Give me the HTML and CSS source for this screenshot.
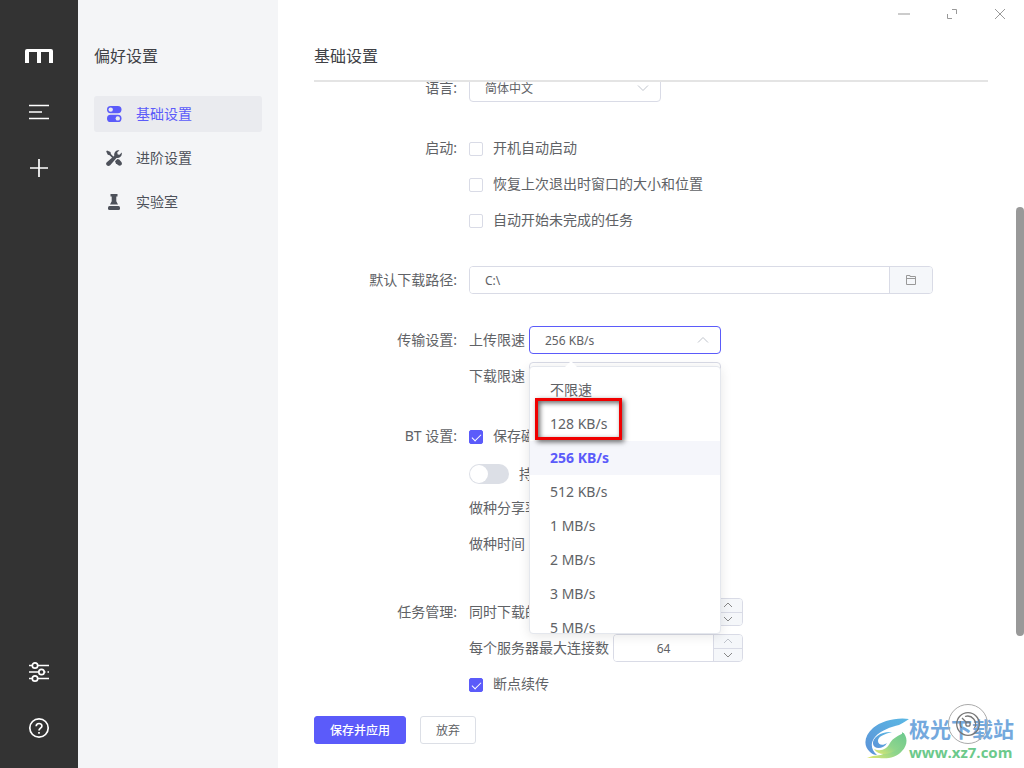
FILE: index.html
```html
<!DOCTYPE html>
<html lang="zh-CN">
<head>
<meta charset="utf-8">
<title>基础设置</title>
<link rel="stylesheet" href="styles.css">
</head>
<body>
<div class="app">
  <aside class="rail">
    <div class="rail-group">
      <svg class="logo" viewBox="0 0 28 24" aria-label="Motrix"><path d="M0 19V7Q0 5 2 5H26Q28 5 28 7V19H24V8H16V19H12V8H4V19Z" fill="#fff"/></svg>
      <button class="icon-btn" aria-label="任务列表"><svg viewBox="0 0 24 24"><path d="M2 5.500H22M2 12H15M2 18.500H22"/></svg></button>
      <button class="icon-btn" aria-label="新建任务"><svg viewBox="0 0 24 24"><path d="M12 3V21M3 12H21"/></svg></button>
    </div>
    <div class="rail-group">
      <button class="icon-btn" aria-label="偏好设置"><svg viewBox="0 0 24 24"><path d="M2 5.500H5M11 5.500H22M2 12H11.500M17.500 12H18.500M20.500 12H22M2 18.500H5M11 18.500H22"/><circle cx="8" cy="5.500" r="2.700"/><circle cx="14.500" cy="12" r="2.700"/><circle cx="8" cy="18.500" r="2.700"/></svg></button>
      <button class="icon-btn" aria-label="帮助"><svg viewBox="0 0 24 24"><circle cx="12" cy="12" r="9.200"/><path d="M9.200 10.300C9.200 6.500 14.900 6.700 14.900 10C14.900 12 12 12.200 12 14.400M12 16V17.800"/></svg></button>
    </div>
  </aside>

  <nav class="subnav">
    <h2 class="title">偏好设置</h2>
    <ul class="menu">
      <li><a class="menu-item active" href="#"><svg viewBox="0 0 16 16"><rect x="1" y="0" width="14.500" height="7.200" rx="3.600"/><circle cx="4.700" cy="3.600" r="2.200" fill="#eaebef"/><rect x="1" y="8.800" width="14.500" height="7.200" rx="3.600"/><circle cx="11.800" cy="12.400" r="2.200" fill="#eaebef"/></svg>基础设置</a></li>
      <li><a class="menu-item" href="#"><svg viewBox="0 0 16 16"><path d="M1 .5L4.500 2L4.900 4L7.800 7L6.600 8.200L3.600 5.200L1.800 4.800L.2 1.500Z"/><path d="M.8 12.200L8.300 5.800C7.400 2.600 10.400-.6 13.500.3L11.200 2.600L11.700 4.400L13.500 4.800L15.700 2.600C16.500 5.800 13.600 8.600 10.500 8L4.200 15.200C2 17.300-1.400 14.400.8 12.200Z"/><path d="M9 11.200L11.400 9L13.200 9.600L15.400 12C17 14.200 14.500 16.800 12.300 15.300L9.800 13.200Z"/></svg>进阶设置</a></li>
      <li><a class="menu-item" href="#"><svg viewBox="0 0 16 16"><path d="M4.500 0H11.500V2.500H10.300V7.200L12 10.500H4L5.700 7.200V2.500H4.500Z"/><rect x="2" y="12" width="12" height="4" rx="1.500"/></svg>实验室</a></li>
    </ul>
  </nav>

  <main class="main">
    <div class="window-controls">
      <button aria-label="最小化"><svg viewBox="0 0 12 12"><path d="M0 6H12"/></svg></button>
      <button aria-label="最大化"><svg viewBox="0 0 12 12"><path d="M6 1.500H10.500V6M1.500 6V10.500H6"/></svg></button>
      <button aria-label="关闭"><svg viewBox="0 0 12 12"><path d="M1 1L11 11M11 1L1 11"/></svg></button>
    </div>
    <header class="header"><h1 class="title">基础设置</h1></header>

    <div class="scroll-area">
      <form class="form" id="settings">
        <div class="group">
          <label class="group-label" for="lang">语言:</label>
          <div class="fields"><div class="row">
            <span class="select"><select id="lang"><option>简体中文</option></select><svg viewBox="0 0 12 12"><path d="M1 3.500L6 8.500L11 3.500"/></svg></span>
          </div></div>
        </div>

        <div class="group">
          <span class="group-label">启动:</span>
          <div class="fields">
            <div class="row"><label class="check"><input type="checkbox">开机自动启动</label></div>
            <div class="row"><label class="check"><input type="checkbox">恢复上次退出时窗口的大小和位置</label></div>
            <div class="row"><label class="check"><input type="checkbox">自动开始未完成的任务</label></div>
          </div>
        </div>

        <div class="group">
          <label class="group-label" for="path">默认下载路径:</label>
          <div class="fields"><div class="row">
            <div class="path"><input id="path" type="text" value="C:\"><button type="button" aria-label="选择文件夹"><svg viewBox="0 0 12 12"><path d="M1.500 1.500H5V2.500H10.500V10.500H1.500ZM1 4.500H11"/></svg></button></div>
          </div></div>
        </div>

        <div class="group">
          <span class="group-label">传输设置:</span>
          <div class="fields">
            <div class="row"><label for="up">上传限速</label>
              <div class="select open"><select id="up"><option>256 KB/s</option></select><svg viewBox="0 0 12 12"><path d="M1 8.500L6 3.500L11 8.500"/></svg>
                <div class="popper">
                  <ul class="options" role="listbox" aria-label="上传限速">
                    <li role="option">不限速</li>
                    <li role="option">128 KB/s</li>
                    <li role="option" class="selected" aria-selected="true">256 KB/s</li>
                    <li role="option">512 KB/s</li>
                    <li role="option">1 MB/s</li>
                    <li role="option">2 MB/s</li>
                    <li role="option">3 MB/s</li>
                    <li role="option">5 MB/s</li>
                  </ul>
                  <div class="highlight"></div>
                </div>
              </div>
            </div>
            <div class="row"><label for="down">下载限速</label>
              <span class="select"><select id="down"><option></option></select></span>
            </div>
          </div>
        </div>

        <div class="group group-wide">
          <span class="group-label">BT 设置:</span>
          <div class="fields">
            <div class="row"><label class="check"><input type="checkbox" checked>保存磁力链接</label></div>
            <div class="row row-switch"><label class="check"><input class="switch" type="checkbox">持续做种</label></div>
            <div class="row">做种分享率</div>
            <div class="row">做种时间</div>
          </div>
        </div>

        <div class="group">
          <span class="group-label">任务管理:</span>
          <div class="fields">
            <div class="row"><label for="tasks">同时下载的最大任务数</label>
              <div class="number"><input id="tasks" type="text"><div class="steps"><button type="button" aria-label="增加"><svg viewBox="0 0 12 12"><path d="M2 8L6 4L10 8"/></svg></button><button type="button" aria-label="减少"><svg viewBox="0 0 12 12"><path d="M2 4L6 8L10 4"/></svg></button></div></div>
            </div>
            <div class="row"><label for="conns">每个服务器最大连接数</label>
              <div class="number"><input id="conns" type="text" value="64"><div class="steps"><button type="button" disabled aria-label="增加"><svg viewBox="0 0 12 12"><path d="M2 8L6 4L10 8"/></svg></button><button type="button" aria-label="减少"><svg viewBox="0 0 12 12"><path d="M2 4L6 8L10 4"/></svg></button></div></div>
            </div>
            <div class="row"><label class="check"><input type="checkbox" checked>断点续传</label></div>
          </div>
        </div>
      </form>
    </div>

    <footer class="actions">
      <button class="btn primary" form="settings">保存并应用</button>
      <button class="btn" type="button">放弃</button>
    </footer>
  </main>

  <div class="scrollbar"></div>

  <div class="watermark">
    <svg class="swirl" viewBox="0 0 44 42">
      <defs>
        <linearGradient id="blue" x1="0" y1="1" x2="1" y2="0"><stop offset="0" stop-color="#5c93d8"/><stop offset="1" stop-color="#5bb8e4"/></linearGradient>
        <linearGradient id="green" x1="0" y1="1" x2="1" y2="0"><stop offset="0" stop-color="#e4e96f"/><stop offset=".45" stop-color="#8fd58c"/><stop offset="1" stop-color="#6cc98f"/></linearGradient>
      </defs>
      <path d="M44 1C32-1 16 3 8 10C-1 18-2 28 5 34C7 36 9 37 12 37C6 32 5 25 10 19C16 12 26 9 34 7C38 5 41 3 44 1Z" fill="url(#blue)"/>
      <path d="M27 14C17 13 7 19 8 26C9 32 19 31 22 25C18 28 13 27 13 23C13 18 20 16 27 14Z" fill="url(#blue)"/>
      <path d="M37 14C43 18 43 27 37 33C31 40 22 41 14 40L2 40C12 36 13 39 20 35C31 31 38 24 37 14Z" fill="url(#green)"/>
      <path d="M39 15C34 17 28 20 25 25C22 31 16 34 9 31C13 38 24 37 31 32C38 28 41 21 39 15Z" fill="url(#green)"/>
    </svg>
    <div class="mark-text"><span class="mark-name">极光下载站</span><span class="mark-url">www.xz7.com</span></div>
    <svg class="gauge" viewBox="0 0 40 40" aria-label="速度">
      <circle cx="20" cy="20" r="19.500" stroke="#aaa" stroke-width="1"/>
      <circle cx="20" cy="20" r="11.300"/>
      <path d="M17 12.500A8 8 0 0 1 26.500 24M12.500 17A8 8 0 0 0 13.500 24M14 14L18.500 18.500"/><circle cx="20" cy="20" r="2.200"/>
    </svg>
  </div>
</div>
</body>
</html>
```
FILE: styles.css
```css
* { box-sizing: border-box; }
body {
  margin: 0;
  font: 14px/20px "Noto Sans", "Noto Sans CJK SC", sans-serif;
  color: #606266;
}
ul { margin: 0; padding: 0; list-style: none; }
button, input, select { font: inherit; color: inherit; margin: 0; }
button { padding: 0; border: 0; background: none; }
svg { display: block; fill: none; stroke: currentColor; }

.app { position: relative; display: flex; height: 100vh; overflow: hidden; background: #fff; }

.rail {
  flex: none;
  width: 78px;
  padding: 44px 0 28px;
  display: flex;
  flex-direction: column;
  justify-content: space-between;
  background: #333;
  color: #fff;
}
.rail-group { display: flex; flex-direction: column; align-items: center; gap: 32px; }
.logo { width: 28px; height: 24px; stroke: none; }
.icon-btn { width: 24px; height: 24px; }
.icon-btn svg { width: 24px; height: 24px; stroke-width: 1.7; }

.subnav { flex: none; width: 200px; padding: 44px 16px 0; background: #f4f5f7; }
.title { margin: 0; font-size: 16px; line-height: 24px; font-weight: 400; color: #404145; }
.menu { margin-top: 28px; display: flex; flex-direction: column; gap: 8px; }
.menu-item {
  display: flex;
  align-items: center;
  gap: 14px;
  height: 36px;
  padding: 0 12px;
  border-radius: 3px;
  color: #4d515a;
  text-decoration: none;
}
.menu-item svg { width: 16px; height: 16px; fill: currentColor; stroke: none; }
.menu-item.active { background: #eaebef; color: #5b5bfa; }

.main { position: relative; flex: 1; min-width: 0; padding: 44px 36px 24px; display: flex; flex-direction: column; }
.window-controls { position: absolute; top: 8px; right: 18px; display: flex; gap: 36px; color: #999; }
.window-controls svg { width: 12px; height: 12px; }
.header { flex: none; padding-bottom: 12px; border-bottom: 2px solid #e4e4e4; }

.scroll-area { flex: 1; min-height: 0; overflow: hidden; }
.form { display: flex; flex-direction: column; gap: 24px; margin-top: -12px; }
.group { display: flex; gap: 12px; }
.group-wide { margin-bottom: 8px; }
.group-label { flex: none; width: 143px; line-height: 36px; text-align: right; }
.fields { flex: 1; min-width: 0; }
.row { display: flex; align-items: center; gap: 4px; height: 36px; }
.row-switch { padding-top: 4px; }

.select { position: relative; width: 192px; height: 28px; }
.select select {
  width: 100%;
  height: 28px;
  padding: 2px 15px 0;
  appearance: none;
  border: 1px solid #d9dbe6;
  border-radius: 4px;
  background: #fff;
  font-size: 12px;
}
.select > svg { position: absolute; top: 8px; right: 12px; width: 12px; height: 12px; color: #c0c4cc; }
.select.open select { border-color: #5b5bfa; }

.popper {
  position: absolute;
  z-index: 2;
  top: 40px;
  left: 0;
  width: 100%;
  border: 1px solid #e4e7ed;
  border-radius: 4px;
  background: #fff;
  box-shadow: 0 2px 12px rgba(0, 0, 0, .1);
}
.popper::before {
  content: "";
  position: absolute;
  top: -6px;
  left: 35px;
  border: 6px solid transparent;
  border-top: 0;
  border-bottom-color: #fff;
}
.options { height: 266px; padding-top: 6px; overflow: hidden; }
.options li { height: 34px; padding: 0 20px; line-height: 34px; }
.options .selected { background: #f5f6fb; color: #5b5bfa; font-weight: 700; }
.highlight {
  position: absolute;
  top: 31px;
  left: 5px;
  width: 87px;
  height: 42px;
  border: 3px solid #f00000;
  box-shadow: 2px 2px 5px rgba(0, 0, 0, .6), inset 2px 2px 5px rgba(0, 0, 0, .6);
}

.check { display: flex; align-items: center; gap: 10px; }
.check input {
  width: 14px;
  height: 14px;
  margin-top: 2px;
  appearance: none;
  border: 1px solid #d9dbe6;
  border-radius: 2px;
  background: #fff;
}
.check input:checked { display: grid; place-items: center; border-color: #5b5bfa; background: #5b5bfa; }
.check input:checked::before {
  content: "";
  width: 4px;
  height: 8px;
  margin-bottom: 2px;
  border: solid #fff;
  border-width: 0 1px 1px 0;
  transform: rotate(45deg);
}
.check .switch { width: 40px; height: 20px; margin-top: 0; padding: 1px; border: 0; border-radius: 10px; background: #dcdfe6; }
.check .switch::before { content: ""; display: block; width: 18px; height: 18px; border-radius: 50%; background: #fff; }

.path, .number { display: flex; height: 28px; border: 1px solid #d9dbe6; border-radius: 4px; overflow: hidden; background: #fff; }
.path { flex: 0 1 464px; }
.path input { flex: 1; min-width: 0; padding: 2px 15px 0; border: 0; font-size: 12px; }
.path button { width: 43px; display: grid; place-items: center; border-left: 1px solid #d9dbe6; background: #f5f7fa; color: #999; }
.path svg { width: 12px; height: 12px; }

.number { width: 130px; }
.number input { flex: 1; min-width: 0; padding: 2px 0 0; border: 0; text-align: center; font-size: 12px; }
.steps { width: 29px; display: flex; flex-direction: column; border-left: 1px solid #d9dbe6; background: #f5f7fa; }
.steps button { flex: 1; display: grid; place-items: center; color: #888; }
.steps button + button { border-top: 1px solid #d9dbe6; }
.steps button:disabled { color: #c0c4cc; }
.steps svg { width: 12px; height: 12px; }

.actions { flex: none; display: flex; gap: 14px; padding-top: 12px; }
.btn { height: 28px; padding: 2px 15px 0; border: 1px solid #dcdfe6; border-radius: 3px; background: #fff; font-size: 12px; }
.btn.primary { border-color: #5b5bfa; background: #5b5bfa; color: #fff; font-weight: 500; }

.scrollbar { position: absolute; top: 207px; right: 0; width: 8px; height: 429px; border-radius: 4px; background: #999; }

.watermark { position: absolute; right: 10px; bottom: 6px; display: flex; align-items: center; }
.swirl { width: 44px; height: 42px; stroke: none; }
.mark-text { display: flex; flex-direction: column; font-weight: 700; }
.mark-name { font-size: 21px; line-height: 26px; color: #74a9dd; }
.mark-url { font: 700 15px/20px "Open Sans", sans-serif; color: #6cc98b; }
.gauge { position: absolute; right: 26px; bottom: 18px; width: 40px; height: 40px; color: #777; stroke-width: 1.3; }
```
